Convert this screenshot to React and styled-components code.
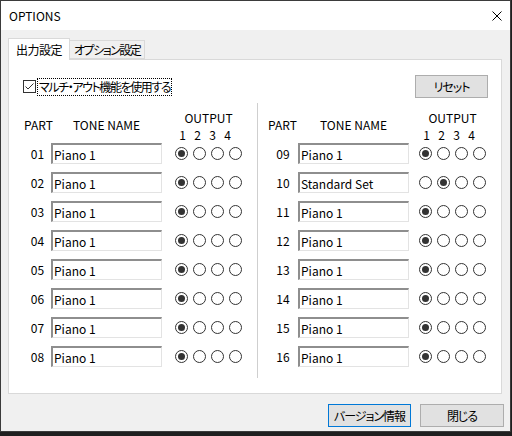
import React from "react";
import styled, { createGlobalStyle } from "styled-components";

const GlobalStyle = createGlobalStyle`
  html, body {
    margin: 0;
    padding: 0;
    background: #1f1f1f;
  }
  body {
    font-family: "Noto Sans CJK JP", "Noto Sans", sans-serif;
    font-feature-settings: "palt";
    font-size: 12px;
    color: #000;
  }
`;

const Window = styled.div`
  width: 511px;
  height: 432px;
  box-sizing: border-box;
  border: 1px solid #3b3b3b;
  background: #f0f0f0;
  display: flex;
  flex-direction: column;
`;

const TitleBar = styled.div`
  height: 29px;
  background: #fff;
  display: flex;
  align-items: center;
  justify-content: space-between;
  padding: 0 8px;
`;

const Title = styled.span`
  font-size: 12px;
  line-height: 16px;
`;

const Content = styled.div`
  padding: 8px 7px 0;
  display: flex;
  flex-direction: column;
`;

const TabRow = styled.div`
  display: flex;
  align-items: flex-end;
  height: 22px;
  margin-bottom: -1px;
  position: relative;
  z-index: 1;
`;

const Tab = styled.div`
  box-sizing: border-box;
  height: ${(p) => (p.active ? "22px" : "19px")};
  padding: 0 ${(p) => (p.active ? "7px" : "4px")};
  margin-bottom: ${(p) => (p.active ? "0" : "1px")};
  background: ${(p) => (p.active ? "#fff" : "#f0f0f0")};
  border: 1px solid #d9d9d9;
  border-bottom: ${(p) => (p.active ? "none" : "1px solid #d9d9d9")};
  border-left: ${(p) => (p.active ? "1px solid #d9d9d9" : "none")};
  display: flex;
  align-items: center;
  line-height: 16px;
  letter-spacing: ${(p) => (p.active ? "-0.5px" : "-1.5px")};
`;

const Panel = styled.div`
  box-sizing: border-box;
  width: 494px;
  height: 335px;
  background: #fff;
  border: 1px solid #d9d9d9;
  display: flex;
  flex-direction: column;
`;

const TopRow = styled.div`
  margin-top: 15px;
  height: 23px;
  padding: 0 13px 0 14px;
  display: flex;
  align-items: center;
  justify-content: space-between;
`;

const CheckLabel = styled.label`
  display: flex;
  align-items: center;
  gap: 2px;
`;

const CheckBox = styled.span`
  width: 13px;
  height: 13px;
  box-sizing: border-box;
  border: 1px solid #333;
  background: #fff;
  display: flex;
`;

const FocusText = styled.span`
  outline: 1px dotted #000;
  padding: 0 1px;
  line-height: 16px;
  letter-spacing: -1.4px;
`;

const Button = styled.button`
  box-sizing: border-box;
  width: ${(p) => p.w}px;
  height: 23px;
  padding: 0;
  background: #e1e1e1;
  border: 1px solid ${(p) => (p.primary ? "#0078d7" : "#adadad")};
  font-family: inherit;
  font-feature-settings: "palt";
  font-size: 12px;
  letter-spacing: -1px;
  color: #000;
`;

const Columns = styled.div`
  margin-top: 5px;
  display: flex;
`;

const Column = styled.div`
  padding-left: ${(p) => p.pad}px;
  width: ${(p) => p.w}px;
  display: flex;
  flex-direction: column;
  gap: 8px;
`;

const Divider = styled.div`
  width: 1px;
  height: 275px;
  background: #cfcfcf;
`;

const Grid = styled.div`
  display: grid;
  grid-template-columns: ${(p) => p.part}px 111px ${(p) => p.gap}px 67px;
  align-items: center;
  height: ${(p) => (p.header ? "32px" : "21px")};
  ${(p) => p.header && "align-items: start;"}
`;

const HeadText = styled.span`
  line-height: 16px;
  white-space: nowrap;
  padding-top: 14px;
  text-align: ${(p) => p.align || "left"};
`;

const OutputHead = styled.div`
  grid-column: 4;
  display: flex;
  flex-direction: column;
  align-items: stretch;
  padding-top: 7px;
`;

const OutputTitle = styled.span`
  line-height: 16px;
  text-align: center;
`;

const Digits = styled.div`
  display: flex;
  margin-top: 2px;
`;

const Digit = styled.span`
  width: 15px;
  text-align: center;
  line-height: 14px;
`;

const PartNo = styled.span`
  text-align: center;
  line-height: 16px;
`;

const ToneInput = styled.input`
  box-sizing: border-box;
  width: 111px;
  height: 21px;
  padding: 0 1px;
  border-style: solid;
  border-width: 2px 1px 1px 2px;
  border-color: #8e8e8e #e3e3e3 #e3e3e3 #8e8e8e;
  font-family: inherit;
  font-feature-settings: "palt";
  font-size: 12px;
  color: #000;
  background: #fff;
  outline: none;
`;

const Radios = styled.div`
  grid-column: 4;
  display: flex;
  gap: 5px;
`;

const Radio = styled.span`
  width: 13px;
  height: 13px;
  box-sizing: border-box;
  border-radius: 50%;
  border: 1px solid #333;
  background: #fff;
  display: flex;
  align-items: center;
  justify-content: center;
  &::after {
    content: "";
    width: 7px;
    height: 7px;
    border-radius: 50%;
    background: ${(p) => (p.on ? "#333" : "transparent")};
  }
`;

const Footer = styled.div`
  margin-top: 10px;
  margin-right: -1px;
  display: flex;
  justify-content: flex-end;
  gap: 9px;
`;

const parts = Array.from({ length: 16 }, (_, i) => ({
  no: String(i + 1).padStart(2, "0"),
  tone: i === 9 ? "Standard Set" : "Piano 1",
  out: i === 9 ? 2 : 1,
}));

function PartColumn({ rows, pad, w, part, gap }) {
  return (
    <Column pad={pad} w={w}>
      <Grid header part={part} gap={gap}>
        <HeadText>PART</HeadText>
        <HeadText align="center">TONE NAME</HeadText>
        <OutputHead>
          <OutputTitle>OUTPUT</OutputTitle>
          <Digits>
            {[1, 2, 3, 4].map((d) => (
              <Digit key={d}>{d}</Digit>
            ))}
          </Digits>
        </OutputHead>
      </Grid>
      {rows.map((r) => (
        <Grid key={r.no} part={part} gap={gap}>
          <PartNo>{r.no}</PartNo>
          <ToneInput readOnly value={r.tone} />
          <span />
          <Radios>
            {[1, 2, 3, 4].map((o) => (
              <Radio key={o} on={o === r.out} />
            ))}
          </Radios>
        </Grid>
      ))}
    </Column>
  );
}

export default function App() {
  return (
    <>
      <GlobalStyle />
      <Window>
        <TitleBar>
          <Title>OPTIONS</Title>
          <svg width="10" height="10" viewBox="0 0 10 10">
            <path d="M0.5 0.5 L9.5 9.5 M9.5 0.5 L0.5 9.5" stroke="#000" strokeWidth="1" />
          </svg>
        </TitleBar>
        <Content>
          <TabRow>
            <Tab active>出力設定</Tab>
            <Tab>オプション設定</Tab>
          </TabRow>
          <Panel>
            <TopRow>
              <CheckLabel>
                <CheckBox>
                  <svg width="11" height="11" viewBox="0 0 11 11">
                    <path d="M1.5 5.5 L4 8 L9.5 2.5" stroke="#333" strokeWidth="1" fill="none" />
                  </svg>
                </CheckBox>
                <FocusText>マルチ・アウト機能を使用する</FocusText>
              </CheckLabel>
              <Button w={73}>リセット</Button>
            </TopRow>
            <Columns>
              <PartColumn rows={parts.slice(0, 8)} pad={15} w={233} part={27} gap={13} />
              <Divider />
              <PartColumn rows={parts.slice(8)} pad={10} w={228} part={30} gap={10} />
            </Columns>
          </Panel>
          <Footer>
            <Button primary w={83}>バージョン情報</Button>
            <Button w={84}>閉じる</Button>
          </Footer>
        </Content>
      </Window>
    </>
  );
}
